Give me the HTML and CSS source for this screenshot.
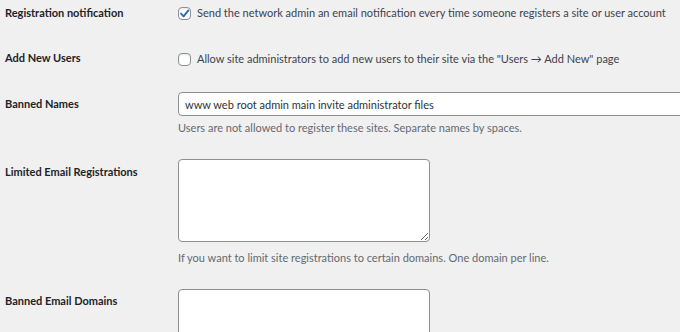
FILE: index.html
```html
<!DOCTYPE html>
<html lang="en">
    <head>
        <meta charset="utf-8">
        <link rel="stylesheet" href="styles.css">
    </head>
    <body>
        <div class="form-table">
            <div class="row row-first">
                <div class="th">Registration notification</div>
                <div class="td">
                    <label class="check-line">
                        <span class="checkbox">
                            <svg width="13" height="13" viewBox="0 0 13 13"><path d="M3 6.6 L5.6 9.4 L10.4 3.4" fill="none" stroke="#2271b1" stroke-width="1.9" stroke-linecap="round" stroke-linejoin="round"/></svg>
                        </span>
                        Send the network admin an email notification every time someone registers a site or user account
                    </label>
                </div>
            </div>
            <div class="row row-second">
                <div class="th">Add New Users</div>
                <div class="td td-check">
                    <label class="check-line">
                        <span class="checkbox"></span>
                        Allow site administrators to add new users to their site via the "Users &rarr; Add New" page
                    </label>
                </div>
            </div>
            <div class="row">
                <div class="th th-field">Banned Names</div>
                <div class="td">
                    <input class="large-text" type="text" value="www web root admin main invite administrator files">
                    <p class="description">Users are not allowed to register these sites. Separate names by spaces.</p>
                </div>
            </div>
            <div class="row">
                <div class="th th-area">Limited Email Registrations</div>
                <div class="td">
                    <textarea class="area"></textarea>
                    <p class="description desc-area">If you want to limit site registrations to certain domains. One domain per line.</p>
                </div>
            </div>
            <div class="row">
                <div class="th th-field">Banned Email Domains</div>
                <div class="td">
                    <textarea class="area"></textarea>
                </div>
            </div>
        </div>
    </body>
</html>
```
FILE: styles.css
```css
* {
    margin: 0;
    padding: 0;
    box-sizing: border-box;
}
body {
    background: #f0f0f1;
    color: #3c434a;
    font-family: Lato, "Open Sans", sans-serif;
    font-size: 11px;
    line-height: 16px;
    overflow: hidden;
}
.form-table {
    height: 100vh;
    overflow: hidden;
    padding: 5px 0 0 5px;
}
.row {
    display: grid;
    grid-template-columns: 173px 1fr;
    padding-bottom: 23px;
}
.row-first {
    padding-bottom: 29px;
}
.row-second {
    padding-bottom: 25px;
}
.th {
    font-weight: bold;
    color: #1d2327;
}
.th-field {
    padding-top: 4px;
}
.th-area {
    padding-top: 5px;
}
.td {
    min-width: 0;
    overflow: hidden;
}
.td-check {
    padding-top: 1px;
}
.check-line {
    display: flex;
    align-items: center;
    gap: 6px;
    white-space: nowrap;
}
.checkbox {
    width: 13px;
    height: 13px;
    flex: none;
    display: flex;
    background: #fff;
    border: 1px solid #8c8f94;
    border-radius: 4px;
    box-shadow: inset 0 1px 2px rgba(0, 0, 0, .1);
}
.checkbox svg {
    margin: -1px;
}
.large-text {
    display: block;
    width: 540px;
    height: 24px;
    padding: 0 6px;
    border: 1px solid #8c8f94;
    border-radius: 4px;
    background: #fff;
    color: #2c3338;
    font: inherit;
    outline: none;
}
.description {
    margin-top: 4px;
    color: #646970;
}
.area {
    display: block;
    width: 252px;
    height: 83px;
    border: 1px solid #8c8f94;
    border-radius: 4px;
    background: #fff;
    font: inherit;
}
.desc-area {
    margin-top: 8px;
}
```
